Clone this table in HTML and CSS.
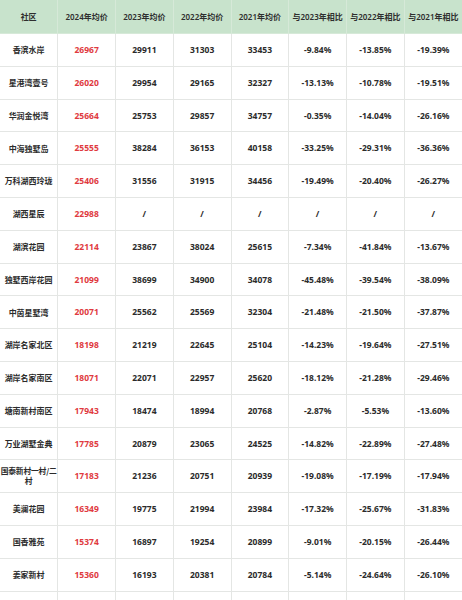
FILE: index.html
```html
<!DOCTYPE html>
<html lang="zh">
<head>
<meta charset="utf-8">
<link rel="stylesheet" href="styles.css">
</head>
<body>
<table class="price-table">
<thead>
<tr><th>社区</th><th>2024年均价</th><th>2023年均价</th><th>2022年均价</th><th>2021年均价</th><th>与2023年相比</th><th>与2022年相比</th><th>与2021年相比</th></tr>
</thead>
<tbody>
<tr><td class="name">香滨水岸</td><td class="hot">26967</td><td>29911</td><td>31303</td><td>33453</td><td>-9.84%</td><td>-13.85%</td><td>-19.39%</td></tr>
<tr><td class="name">星港湾壹号</td><td class="hot">26020</td><td>29954</td><td>29165</td><td>32327</td><td>-13.13%</td><td>-10.78%</td><td>-19.51%</td></tr>
<tr><td class="name">华润金悦湾</td><td class="hot">25664</td><td>25753</td><td>29857</td><td>34757</td><td>-0.35%</td><td>-14.04%</td><td>-26.16%</td></tr>
<tr><td class="name">中海独墅岛</td><td class="hot">25555</td><td>38284</td><td>36153</td><td>40158</td><td>-33.25%</td><td>-29.31%</td><td>-36.36%</td></tr>
<tr><td class="name">万科湖西玲珑</td><td class="hot">25406</td><td>31556</td><td>31915</td><td>34456</td><td>-19.49%</td><td>-20.40%</td><td>-26.27%</td></tr>
<tr><td class="name">湖西星辰</td><td class="hot">22988</td><td>/</td><td>/</td><td>/</td><td>/</td><td>/</td><td>/</td></tr>
<tr><td class="name">湖滨花园</td><td class="hot">22114</td><td>23867</td><td>38024</td><td>25615</td><td>-7.34%</td><td>-41.84%</td><td>-13.67%</td></tr>
<tr><td class="name">独墅西岸花园</td><td class="hot">21099</td><td>38699</td><td>34900</td><td>34078</td><td>-45.48%</td><td>-39.54%</td><td>-38.09%</td></tr>
<tr><td class="name">中茵星墅湾</td><td class="hot">20071</td><td>25562</td><td>25569</td><td>32304</td><td>-21.48%</td><td>-21.50%</td><td>-37.87%</td></tr>
<tr><td class="name">湖岸名家北区</td><td class="hot">18198</td><td>21219</td><td>22645</td><td>25104</td><td>-14.23%</td><td>-19.64%</td><td>-27.51%</td></tr>
<tr><td class="name">湖岸名家南区</td><td class="hot">18071</td><td>22071</td><td>22957</td><td>25620</td><td>-18.12%</td><td>-21.28%</td><td>-29.46%</td></tr>
<tr><td class="name">塘南新村南区</td><td class="hot">17943</td><td>18474</td><td>18994</td><td>20768</td><td>-2.87%</td><td>-5.53%</td><td>-13.60%</td></tr>
<tr><td class="name">万业湖墅金典</td><td class="hot">17785</td><td>20879</td><td>23065</td><td>24525</td><td>-14.82%</td><td>-22.89%</td><td>-27.48%</td></tr>
<tr><td class="name tight">国泰新村一村/二<br>村</td><td class="hot">17183</td><td>21236</td><td>20751</td><td>20939</td><td>-19.08%</td><td>-17.19%</td><td>-17.94%</td></tr>
<tr><td class="name">美澜花园</td><td class="hot">16349</td><td>19775</td><td>21994</td><td>23984</td><td>-17.32%</td><td>-25.67%</td><td>-31.83%</td></tr>
<tr><td class="name">国香雅苑</td><td class="hot">15374</td><td>16897</td><td>19254</td><td>20899</td><td>-9.01%</td><td>-20.15%</td><td>-26.44%</td></tr>
<tr><td class="name">姜家新村</td><td class="hot">15360</td><td>16193</td><td>20381</td><td>20784</td><td>-5.14%</td><td>-24.64%</td><td>-26.10%</td></tr>
<tr><td class="name"></td><td class="hot"></td><td></td><td></td><td></td><td></td><td></td><td></td></tr>
</tbody>
</table>
</body>
</html>
```
FILE: styles.css
```css
html, body {
  margin: 0;
  padding: 0;
  background: #ffffff;
}
body {
  width: 462px;
  overflow: hidden;
  font-family: "Noto Sans", "Noto Sans CJK SC", sans-serif;
  color: #2b2b2b;
}
.price-table {
  width: 462px;
  table-layout: fixed;
  border-collapse: collapse;
}
.price-table th,
.price-table td {
  text-align: center;
  vertical-align: middle;
  border: 1px solid #e4e6e4;
  padding: 0 1px;
  line-height: 1.15;
}
.price-table tr > :first-child { border-left: none; }
.price-table tr > :last-child { border-right: none; }
.price-table thead th {
  height: 33px;
  background: #c8e3cc;
  font-size: 8px;
  font-weight: 600;
  color: #2e2e2e;
  border-top: none;
  border-color: #d6e9d8;
}
.price-table tbody tr {
  height: 32.8px;
}
.price-table td {
  font-size: 8.5px;
  font-weight: 700;
}
.price-table td.name {
  font-family: "Noto Sans CJK SC", sans-serif;
  font-size: 8px;
  font-weight: 700;
}
.price-table td.tight {
  padding: 0;
  font-size: 7.8px;
  line-height: 1.3;
  letter-spacing: -0.2px;
  white-space: nowrap;
}
.price-table td.hot {
  color: #e03a40;
}
```
